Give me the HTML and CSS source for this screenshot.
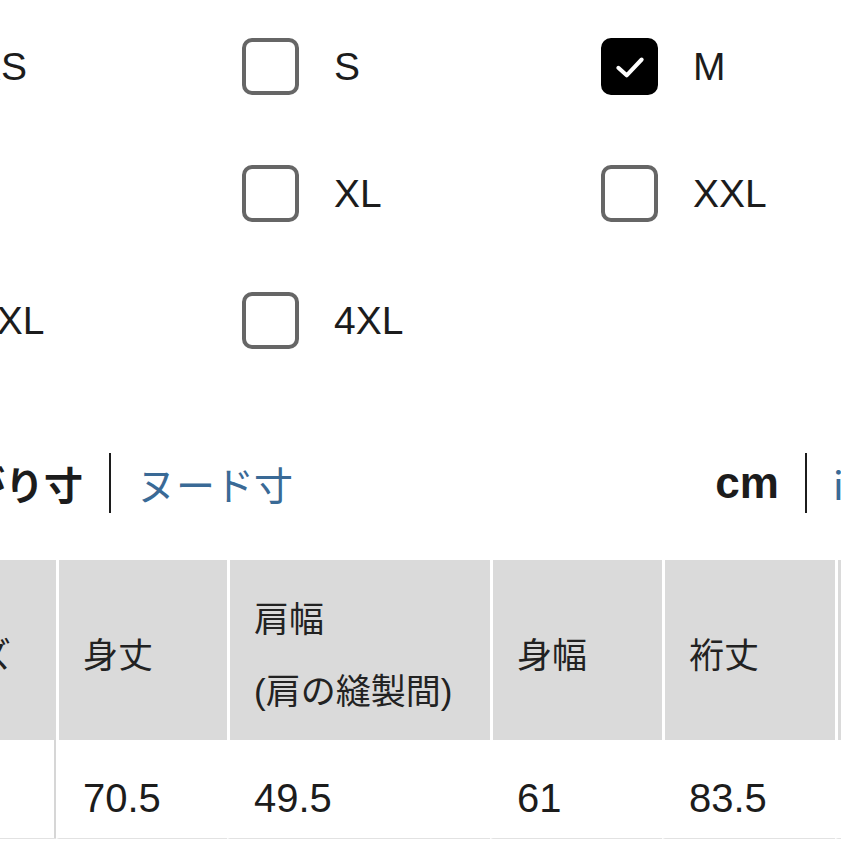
FILE: index.html
```html
<!DOCTYPE html>
<html lang="ja">
<head>
    <meta charset="UTF-8">
    <meta name="viewport" content="width=device-width, initial-scale=1.0">
    <title>サイズ</title>
    <link rel="stylesheet" href="styles.css">
</head>
<body>
    <div class="page">
        <!-- Size choices -->
        <div class="sizes">
            <label class="size"><span class="box"></span><span class="size-name">XS</span></label>
            <label class="size"><span class="box"></span><span class="size-name">S</span></label>
            <label class="size"><span class="box checked">
                <svg viewBox="0 0 24 24" width="40" height="40"><polyline points="5,12.5 10,17 19,7.5" fill="none" stroke="#fff" stroke-width="2.4" stroke-linecap="round" stroke-linejoin="round"/></svg>
            </span><span class="size-name">M</span></label>
            <label class="size"><span class="box"></span><span class="size-name">L</span></label>
            <label class="size"><span class="box"></span><span class="size-name">XL</span></label>
            <label class="size"><span class="box"></span><span class="size-name">XXL</span></label>
            <label class="size"><span class="box"></span><span class="size-name">3XL</span></label>
            <label class="size"><span class="box"></span><span class="size-name">4XL</span></label>
        </div>

        <!-- Measure type / unit -->
        <div class="unit-bar">
            <div class="switch">
                <span class="on">仕上がり寸</span>
                <span class="bar"></span>
                <a class="off" href="#">ヌード寸</a>
            </div>
            <div class="switch">
                <span class="on unit">cm</span>
                <span class="bar"></span>
                <a class="off" href="#">inch</a>
            </div>
        </div>

        <!-- Size chart -->
        <table class="chart">
            <colgroup>
                <col style="width:173px">
                <col style="width:171px">
                <col style="width:263px">
                <col style="width:172px">
                <col style="width:173px">
                <col style="width:172px">
            </colgroup>
            <thead>
                <tr>
                    <th>サイズ</th>
                    <th>身丈</th>
                    <th>肩幅<br>(肩の縫製間)</th>
                    <th>身幅</th>
                    <th>裄丈</th>
                    <th>袖丈</th>
                </tr>
            </thead>
            <tbody>
                <tr>
                    <td>M</td>
                    <td>70.5</td>
                    <td>49.5</td>
                    <td>61</td>
                    <td>83.5</td>
                    <td>59</td>
                </tr>
            </tbody>
        </table>
    </div>
</body>
</html>
```

FILE: styles.css
```css
/* General */
html, body {
    overflow: hidden;
}

body {
    margin: 0;
    background: #fff;
    color: #1c1c1c;
    font-family: "Liberation Sans", "Noto Sans CJK JP", sans-serif;
}

.page {
    width: 1140px;
    margin-left: -117px;
}

/* Size choices */
.sizes {
    display: grid;
    grid-template-columns: repeat(3, 359px);
    grid-auto-rows: 127px;
    padding-top: 3px;
}

.size {
    display: flex;
    align-items: center;
    gap: 35px;
}

.box {
    width: 57px;
    height: 57px;
    box-sizing: border-box;
    border: 4px solid #666;
    border-radius: 10px;
    display: flex;
    align-items: center;
    justify-content: center;
}

.box.checked {
    background: #000;
    border-color: #000;
}

.size-name {
    font-size: 39px;
}

/* Measure type / unit */
.unit-bar {
    display: flex;
    justify-content: space-between;
    align-items: center;
    height: 60px;
    margin-top: 69px;
    padding-left: 5px;
    width: 1023px;
}

.switch {
    display: flex;
    align-items: center;
    gap: 26px;
    font-size: 39px;
}

.switch .on {
    font-weight: bold;
    font-family: "Noto Sans CJK JP", sans-serif;
}

.switch .unit {
    font-family: "Liberation Sans", sans-serif;
    font-size: 44px;
}

.switch .bar {
    width: 2px;
    height: 60px;
    background: #1c1c1c;
}

.switch .off {
    color: #3a6a96;
    text-decoration: none;
    font-family: "Noto Sans CJK JP", sans-serif;
}

/* Size chart */
.chart {
    margin-top: 47px;
    border-collapse: separate;
    border-spacing: 0;
    table-layout: fixed;
    width: 1124px;
}

.chart th {
    background: #dadada;
    font-weight: normal;
    font-size: 35px;
    line-height: 72px;
    padding: 24px 24px 12px;
    text-align: left;
    vertical-align: middle;
    white-space: nowrap;
    color: #222;
}

.chart th + th,
.chart td + td {
    border-left: 3px solid #fff;
}

.chart td {
    font-size: 40px;
    line-height: 40px;
    padding: 38px 24px 20px;
    border-bottom: 1px solid #e2e2e2;
}

.chart td:first-child {
    box-shadow: inset -2px 0 0 #d6d6d6;
}
```
